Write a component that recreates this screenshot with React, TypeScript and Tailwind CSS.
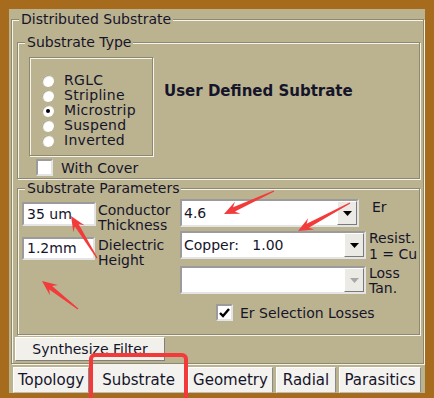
import type { ReactNode } from 'react'

const ETCH = 'border border-[#8d8870] shadow-[inset_1px_1px_0_#f5f3ea,1px_1px_0_#f5f3ea]'
const SUNKEN = 'border-2 border-t-[#9b9b9b] border-l-[#9b9b9b] border-r-[#e4e4e4] border-b-[#e4e4e4] bg-white'

function Group({ label, className, children }: { label: string; className: string; children?: ReactNode }) {
  return (
    <div className={`relative ${ETCH} ${className}`}>
      <span className="absolute -top-[9px] left-[7px] whitespace-nowrap bg-[#bbb28f] px-[2px] leading-[16px]">{label}</span>
      {children}
    </div>
  )
}

function Radio({ label, checked }: { label: string; checked?: boolean }) {
  return (
    <div className="flex h-[15px] items-center gap-[10px] leading-[15px]">
      <span className="flex h-[12px] w-[12px] items-center justify-center rounded-full bg-white shadow-[inset_1px_1px_1px_#a39d82]">
        {checked && <span className="h-[4px] w-[4px] rounded-full bg-black" />}
      </span>
      <span className="tracking-[0.3px]">{label}</span>
    </div>
  )
}

function CheckBox({ checked }: { checked?: boolean }) {
  return (
    <span className={`flex h-[17px] w-[17px] items-center justify-center ${SUNKEN}`}>
      {checked && (
        <svg width="11" height="10" viewBox="0 0 11 10">
          <path d="M1 5 L4 8 L10 1" fill="none" stroke="#000" strokeWidth="2.4" />
        </svg>
      )}
    </span>
  )
}

function Combo({ value, width, disabled }: { value: string; width: string; disabled?: boolean }) {
  return (
    <div className={`flex h-[28px] ${width} ${SUNKEN}`}>
      <span className="flex-1 whitespace-pre pl-[2px] leading-[24px]">{value}</span>
      <span className="flex h-[24px] w-[20px] items-center justify-center border border-t-white border-l-white border-r-[#7a7a7a] border-b-[#7a7a7a] bg-[#ebeae5]">
        <svg width="9" height="5" viewBox="0 0 9 5">
          <path d="M0 0 H9 L4.5 5 Z" fill={disabled ? '#a8a8a8' : '#000'} />
        </svg>
      </span>
    </div>
  )
}

function Tab({ label, width, selected }: { label: string; width: string; selected?: boolean }) {
  return (
    <div
      className={`flex items-center justify-center border border-t-white border-l-white border-r-[#8a8a8a] border-b-[#bdbdb5] bg-[#f3f2ee] text-[15px] leading-[16px] ${width} ${selected ? 'h-[29px] pt-[3px]' : 'h-[26px]'}`}
    >
      {label}
    </div>
  )
}

function arrowPoints(tx: number, ty: number, hx: number, hy: number) {
  const dx = hx - tx
  const dy = hy - ty
  const len = Math.hypot(dx, dy)
  const ux = dx / len
  const uy = dy / len
  const nx = -uy
  const ny = ux
  const p = (along: number, side: number) => `${hx - ux * along + nx * side},${hy - uy * along + ny * side}`
  return [p(len, 0.6), p(11, 2.3), p(15, 6.5), p(0, 0), p(15, -6.5), p(11, -2.3), p(len, -0.6)].join(' ')
}

const arrows = [
  [274, 191, 224, 214],
  [350, 203, 298, 231],
  [97, 258, 71, 216],
  [78, 309, 42, 281],
]

export default function App() {
  return (
    <div className="relative h-[398px] w-[434px] overflow-hidden bg-[#a66b1d] pl-[9px] pt-[9px] font-['DejaVu_Sans',sans-serif] text-[14px] text-[#15152a]">
      <div className="flex h-[384px] w-[416px] flex-col bg-[#bbb28f]">
        <Group label="Distributed Substrate" className="ml-[2px] mt-[10px] flex h-[345px] w-[413px] flex-col">
          <Group label="Substrate Type" className="ml-[5px] mt-[22px] h-[137px] w-[403px]">
            <div className="flex items-start">
              <div className={`ml-[11px] mt-[14px] h-[99px] w-[124px] pl-[12px] pt-[15px] ${ETCH}`}>
                <Radio label="RGLC" />
                <Radio label="Stripline" />
                <Radio label="Microstrip" checked />
                <Radio label="Suspend" />
                <Radio label="Inverted" />
              </div>
              <div className="ml-[11px] mt-[40px] whitespace-nowrap text-[15px] font-bold leading-[16px]">User Defined Subtrate</div>
            </div>
            <div className="ml-[18px] mt-[3px] flex items-center gap-[8px] leading-[16px]">
              <CheckBox />
              <span>With Cover</span>
            </div>
          </Group>

          <Group label="Substrate Parameters" className="ml-[5px] mt-[9px] h-[147px] w-[403px]">
            <div className="flex items-start">
              <div className="ml-[4px] mt-[13px] flex w-[158px] flex-col gap-[4px]">
                <div className="flex items-start">
                  <span className={`h-[24px] w-[74px] pl-[3px] leading-[20px] ${SUNKEN}`}>35 um</span>
                  <span className="ml-[2px] mt-[1px] leading-[15px]">Conductor<br />Thickness</span>
                </div>
                <div className="flex items-start">
                  <span className={`h-[23px] w-[73px] pl-[3px] leading-[19px] ${SUNKEN}`}>1.2mm</span>
                  <span className="ml-[3px] mt-[1px] leading-[15px]">Dielectric<br />Height</span>
                </div>
              </div>
              <div className="mt-[10px] flex flex-col">
                <div className="flex items-start">
                  <Combo value="4.6" width="w-[179px]" />
                  <span className="ml-[13px] leading-[16px]">Er</span>
                </div>
                <div className="mt-[4px] flex items-start">
                  <Combo value="Copper:   1.00" width="w-[186px]" />
                  <span className="ml-[3px] -mt-[1px] whitespace-nowrap leading-[16px]">Resist.<br />1 = Cu</span>
                </div>
                <div className="mt-[4px] flex items-start">
                  <Combo value="" width="w-[186px]" disabled />
                  <span className="ml-[3px] leading-[15px]">Loss<br />Tan.</span>
                </div>
                <div className="ml-[36px] mt-[8px] flex items-center gap-[7px] leading-[16px]">
                  <CheckBox checked />
                  <span className="whitespace-nowrap">Er Selection Losses</span>
                </div>
              </div>
            </div>
          </Group>

          <button className="ml-[3px] mt-[2px] h-[24px] w-[150px] border border-t-white border-l-white border-r-[#7e7e7e] border-b-[#7e7e7e] bg-[#f1f0eb] leading-[16px]">
            Synthesize Filter
          </button>
        </Group>

        <div className="ml-[4px] flex h-[29px] items-end gap-[3px]">
          <Tab label="Topology" width="w-[76px]" />
          <Tab label="Substrate" width="w-[93px]" selected />
          <Tab label="Geometry" width="w-[85px]" />
          <Tab label="Radial" width="w-[60px]" />
          <Tab label="Parasitics" width="w-[82px]" />
        </div>
      </div>

      <div className="pointer-events-none absolute left-[89px] top-[353px] h-[60px] w-[99px] rounded-[6px] border-[4px] border-[#f23a3a]" />
      <svg className="pointer-events-none absolute inset-0" width="434" height="398">
        {arrows.map(([tx, ty, hx, hy], i) => (
          <polygon key={i} points={arrowPoints(tx, ty, hx, hy)} fill="#f23c3c" />
        ))}
      </svg>
    </div>
  )
}
